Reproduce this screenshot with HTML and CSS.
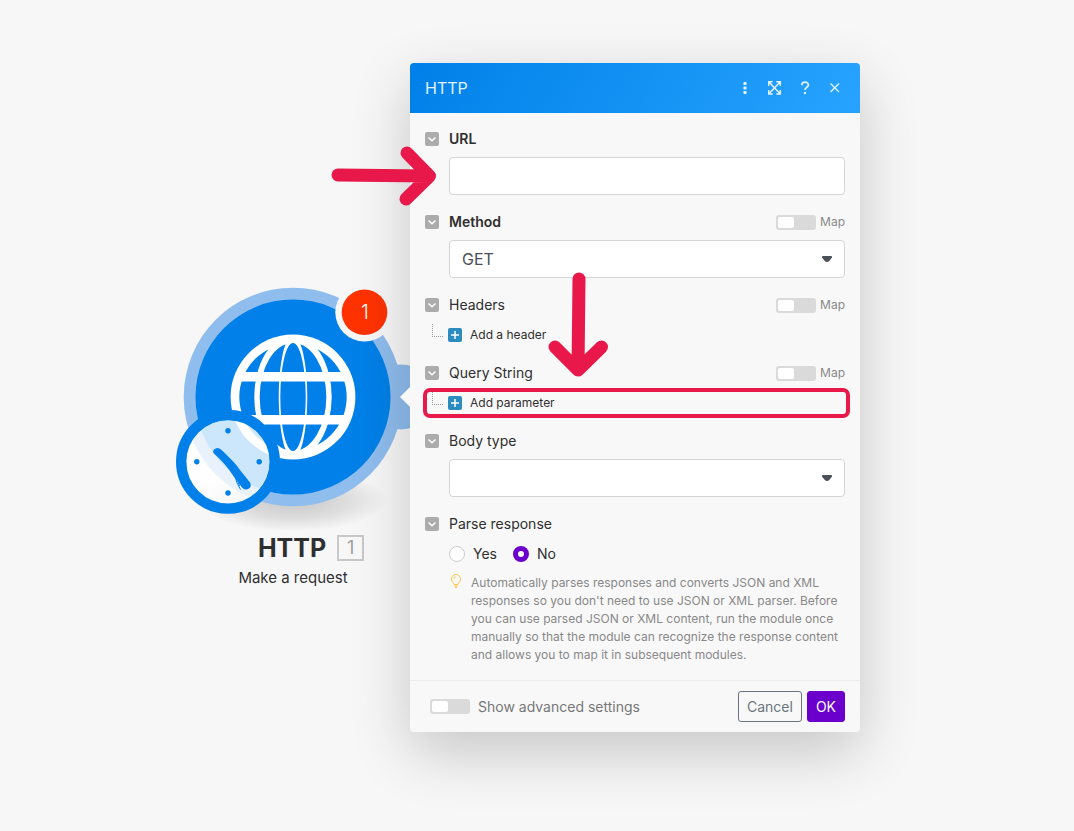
FILE: index.html
```html
<!DOCTYPE html>
<html lang="en">
<head>
  <meta charset="UTF-8">
  <meta name="viewport" content="width=device-width, initial-scale=1.0">
  <title>HTTP - Make a request</title>
  <link rel="stylesheet" href="styles.css">
</head>
<body>
  <main class="canvas">
    <section class="module">
      <svg class="module-art" viewBox="170 280 250 250" aria-hidden="true">
        <defs>
          <radialGradient id="ground">
            <stop offset="0" stop-color="#000" stop-opacity=".2"/>
            <stop offset=".6" stop-color="#000" stop-opacity=".1"/>
            <stop offset="1" stop-color="#000" stop-opacity="0"/>
          </radialGradient>
        </defs>
        <ellipse cx="293" cy="500" rx="94" ry="32" fill="url(#ground)"/>
        <circle cx="401" cy="397" r="32.5" fill="#8fbdee"/>
        <circle cx="293" cy="397" r="109.3" fill="#8fbdee"/>
        <circle cx="293" cy="397" r="97.5" fill="#0080e8"/>

        <!-- globe -->
        <circle cx="293" cy="397" r="62.4" fill="#fff"/>
        <circle cx="293" cy="397" r="53.7" fill="#0080e8"/>
        <ellipse cx="293" cy="397" rx="38.7" ry="62" fill="#fff"/>
        <ellipse cx="293" cy="397" rx="33.3" ry="54" fill="#0080e8"/>
        <ellipse cx="293" cy="397" rx="14.3" ry="62" fill="#fff"/>
        <ellipse cx="293" cy="397" rx="12.7" ry="54" fill="#0080e8"/>
        <path d="M237 372h112v9.4H237zM237 415h112v9.4H237z" fill="#fff"/>

        <!-- clock -->
        <circle cx="228" cy="461.8" r="42" fill="#fff" fill-opacity=".8"/>
        <circle cx="228" cy="461.8" r="46.8" fill="none" stroke="#0080e8" stroke-width="10.4"/>
        <g fill="#0080e8">
          <circle cx="228" cy="430.7" r="2.7"/>
          <circle cx="196.8" cy="461.8" r="2.7"/>
          <circle cx="259.2" cy="461.8" r="2.7"/>
          <circle cx="228" cy="493" r="2.7"/>
          <path d="M214 449.500Q217.500 446.500 221 449.500C229 457 236 464 240 470L250 482.500Q252 486 249 488.500Q245 491 242 487.500L234 477C228 467 221 460 214.500 454Q212 452 214 449.500Z"/>
        </g>
        <path d="M235 475Q235.500 482 240.500 489.500M237 478L239.500 486" fill="none" stroke="#0080e8"/>

        <circle cx="364.500" cy="312.300" r="29.200" fill="#f7f7f7"/>
        <circle cx="364.500" cy="312.300" r="22.800" fill="#ff3200"/>
      </svg>
      <span class="module-badge">1</span>
      <div class="module-title">
        <h1>HTTP</h1>
        <span class="module-number">1</span>
      </div>
      <p class="module-subtitle">Make a request</p>
    </section>

    <form class="dialog">
      <header class="dialog-header">
        <h2>HTTP</h2>
        <div class="dialog-tools">
          <button type="button" class="tool" aria-label="More">
            <svg viewBox="0 0 14 14"><path d="M5.500 1h3v3h-3zM5.500 5.500h3v3h-3zM5.500 10h3v3h-3z" fill="currentColor"/></svg>
          </button>
          <button type="button" class="tool" aria-label="Expand">
            <svg viewBox="0 0 14 14"><path d="M.7 5V.7h4M8.300 .7h4V5M12.300 9v4h-4M4.700 13h-4V9M.7 .7l11.600 12.300M12.300 .7L.7 13" fill="none" stroke="currentColor" stroke-width="1.500"/></svg>
          </button>
          <button type="button" class="tool" aria-label="Help">
            <svg viewBox="0 0 14 14"><path d="M3.800 4.300C3.800 0 10.400.4 10.400 3.900C10.400 6.300 7 6.200 7 9" fill="none" stroke="currentColor" stroke-width="1.700"/><circle cx="7" cy="12" r="1.200" fill="currentColor"/></svg>
          </button>
          <button type="button" class="tool" aria-label="Close">
            <svg viewBox="0 0 14 14"><path d="M2.500 2.500l8.500 8.500M11 2.500L2.500 11" fill="none" stroke="currentColor" stroke-width="1.400"/></svg>
          </button>
        </div>
      </header>

      <div class="dialog-body">
        <div class="field">
          <div class="field-head">
            <button type="button" class="collapse" aria-label="Toggle URL"><svg viewBox="0 0 14 14"><path d="M3.500 5.500L7 8.800l3.500-3.300"/></svg></button>
            <label class="field-label required" for="url">URL</label>
          </div>
          <div class="field-control">
            <input type="text" class="text-input" id="url">
          </div>
        </div>

        <div class="field">
          <div class="field-head">
            <button type="button" class="collapse" aria-label="Toggle Method"><svg viewBox="0 0 14 14"><path d="M3.500 5.500L7 8.800l3.500-3.300"/></svg></button>
            <label class="field-label required" for="method">Method</label>
            <label class="map"><input type="checkbox" class="switch">Map</label>
          </div>
          <div class="field-control">
            <select class="text-input" id="method">
              <option>GET</option>
              <option>POST</option>
            </select>
            <svg class="caret" viewBox="0 0 10 6"><path d="M.5 0h9q.5 0 .5 1.500L7 5.200Q5 6.800 3 5.200L0 1.500Q0 0 .5 0z"/></svg>
          </div>
        </div>

        <div class="field">
          <div class="field-head">
            <button type="button" class="collapse" aria-label="Toggle Headers"><svg viewBox="0 0 14 14"><path d="M3.500 5.500L7 8.800l3.500-3.300"/></svg></button>
            <span class="field-label">Headers</span>
            <label class="map"><input type="checkbox" class="switch">Map</label>
          </div>
          <div class="add-row">
            <button type="button" class="add"><svg viewBox="0 0 14 14"><path d="M7 3v8M3 7h8"/></svg>Add a header</button>
          </div>
        </div>

        <div class="field">
          <div class="field-head">
            <button type="button" class="collapse" aria-label="Toggle Query String"><svg viewBox="0 0 14 14"><path d="M3.500 5.500L7 8.800l3.500-3.300"/></svg></button>
            <span class="field-label">Query String</span>
            <label class="map"><input type="checkbox" class="switch">Map</label>
          </div>
          <div class="add-row highlighted">
            <button type="button" class="add"><svg viewBox="0 0 14 14"><path d="M7 3v8M3 7h8"/></svg>Add parameter</button>
          </div>
        </div>

        <div class="field">
          <div class="field-head">
            <button type="button" class="collapse" aria-label="Toggle Body type"><svg viewBox="0 0 14 14"><path d="M3.500 5.500L7 8.800l3.500-3.300"/></svg></button>
            <label class="field-label" for="bodyType">Body type</label>
          </div>
          <div class="field-control">
            <select class="text-input" id="bodyType">
              <option></option>
            </select>
            <svg class="caret" viewBox="0 0 10 6"><path d="M.5 0h9q.5 0 .5 1.500L7 5.200Q5 6.800 3 5.200L0 1.500Q0 0 .5 0z"/></svg>
          </div>
        </div>

        <div class="field">
          <div class="field-head">
            <button type="button" class="collapse" aria-label="Toggle Parse response"><svg viewBox="0 0 14 14"><path d="M3.500 5.500L7 8.800l3.500-3.300"/></svg></button>
            <span class="field-label">Parse response</span>
          </div>
          <div class="field-control">
            <div class="radios">
              <label><input type="radio" name="parse">Yes</label>
              <label><input type="radio" name="parse" checked>No</label>
            </div>
            <div class="help">
              <svg class="bulb" viewBox="0 0 14 16"><path d="M5 10.500C5 8.500 2.500 8 2.500 5a4.500 4.500 0 0 1 9 0C11.500 8 9 8.500 9 10.500zM5 12h4M6 13.500h2M4.800 5Q5 3 7 2.800"/></svg>
              <p>Automatically parses responses and converts JSON and XML responses so you don't need to use JSON or XML parser. Before you can use parsed JSON or XML content, run the module once manually so that the module can recognize the response content and allows you to map it in subsequent modules.</p>
            </div>
          </div>
        </div>
      </div>

      <footer class="dialog-footer">
        <label class="advanced"><input type="checkbox" class="switch">Show advanced settings</label>
        <button type="button" class="btn">Cancel</button>
        <button type="submit" class="btn btn-primary">OK</button>
      </footer>

      <svg class="arrow arrow-right" viewBox="0 0 106 62" aria-hidden="true"><path d="M7 30l91 1M76 8l22.500 23L75 54"/></svg>
      <svg class="arrow arrow-down" viewBox="0 0 62 106" aria-hidden="true"><path d="M32 8l-1 91M8 76l23 23L54.500 76"/></svg>
    </form>
  </main>
</body>
</html>
```
FILE: styles.css
```css
* {
  box-sizing: border-box;
}

body {
  margin: 0;
  background-color: #f7f7f7;
  color: #2f2f2f;
  font-family: Inter, "Liberation Sans", sans-serif;
  font-size: 14px;
}

h1, h2, p {
  margin: 0;
}

button, input, select {
  font-family: inherit;
  margin: 0;
}

button {
  cursor: pointer;
}

.canvas {
  position: relative;
  min-height: 100vh;
  overflow: hidden;
}

/* module node */
.module {
  position: absolute;
  left: 168px;
  top: 280px;
  width: 250px;
  display: flex;
  flex-direction: column;
  align-items: center;
}

.module-art {
  width: 250px;
  height: 250px;
  margin-left: 4px;
}

.module-badge {
  position: absolute;
  left: 174px;
  top: 20px;
  width: 46px;
  line-height: 24px;
  text-align: center;
  font-size: 20px;
  font-weight: 300;
  color: #fff;
}

.module-title {
  display: flex;
  align-items: center;
  gap: 11px;
  margin-left: 36px;
}

.module-title h1 {
  font-size: 25px;
  line-height: 36px;
  font-weight: 700;
}

.module-number {
  width: 27px;
  border: 2px solid #c8c8c8;
  line-height: 22px;
  text-align: center;
  font-size: 18px;
  color: #a0a0a0;
}

.module-subtitle {
  font-size: 15px;
  line-height: 24px;
}

/* settings dialog */
.dialog {
  position: absolute;
  left: 410px;
  top: 63px;
  width: 450px;
  background-color: #f8f8f8;
  border-radius: 4px;
  box-shadow: 0 20px 60px rgba(0, 0, 0, 0.2);
}

.dialog::before {
  content: "";
  position: absolute;
  left: -10px;
  top: 324px;
  border: 10px solid transparent;
  border-left-width: 0;
  border-right-color: #f8f8f8;
}

.dialog-header {
  display: flex;
  align-items: center;
  justify-content: space-between;
  height: 50px;
  padding: 0 18px 0 15px;
  border-radius: 4px 4px 0 0;
  background: linear-gradient(120deg, #0080e8, #27a3ff);
  color: #e2f2ff;
}

.dialog-header h2 {
  font-size: 16px;
  font-weight: 400;
}

.dialog-tools {
  display: flex;
  gap: 16px;
}

.tool {
  width: 14px;
  height: 14px;
  padding: 0;
  border: none;
  background: none;
  color: inherit;
}

.tool svg {
  display: block;
}

.dialog-body {
  padding: 14px 15px 16px;
}

.field + .field {
  margin-top: 15px;
}

.field-head {
  display: flex;
  align-items: center;
  gap: 10px;
  height: 24px;
  margin-bottom: 6px;
  line-height: 16px;
}

.collapse {
  width: 14px;
  height: 14px;
  padding: 0;
  border: none;
  border-radius: 2px;
  background-color: #acacac;
}

.collapse svg {
  display: block;
  fill: none;
  stroke: #fff;
  stroke-width: 1.5;
}

.required {
  font-weight: 600;
}

.map {
  display: flex;
  align-items: center;
  gap: 4px;
  margin-left: auto;
  font-size: 12px;
  color: #888;
}

.switch {
  appearance: none;
  width: 40px;
  height: 15px;
  padding: 2px;
  border-radius: 3px;
  background-color: #dadada;
}

.switch::before {
  content: "";
  display: block;
  width: 16px;
  height: 11px;
  border-radius: 2px;
  background-color: #fff;
}

.field-control {
  position: relative;
  margin-left: 24px;
}

.text-input {
  display: block;
  appearance: none;
  width: 100%;
  height: 38px;
  padding: 0 12px;
  border: 1px solid #d5d5d5;
  border-radius: 4px;
  background-color: #fff;
  font-size: 16px;
  color: #495057;
}

.caret {
  position: absolute;
  right: 13px;
  top: 16px;
  width: 10px;
  height: 6px;
  fill: #495057;
  pointer-events: none;
}

.add-row {
  position: relative;
  display: flex;
  align-items: center;
  gap: 6px;
  height: 23px;
  padding-left: 7px;
}

.add-row::before {
  content: "";
  width: 10px;
  height: 12px;
  margin-bottom: 8px;
  border: dotted #999;
  border-width: 0 0 1px 1px;
}

.highlighted::after {
  content: "";
  position: absolute;
  inset: -3px -5px -4px -2px;
  border: 4px solid #e9184a;
  border-radius: 7px;
  pointer-events: none;
}

.add {
  display: flex;
  align-items: center;
  gap: 8px;
  margin-left: -1px;
  padding: 0;
  border: none;
  background: none;
  font-size: 12px;
  color: #2f2f2f;
}

.add svg {
  width: 14px;
  height: 14px;
  border-radius: 2px;
  background-color: #2d8cbe;
  stroke: #fff;
  stroke-width: 1.5;
}

.radios {
  display: flex;
  gap: 16px;
  height: 24px;
  line-height: 16px;
}

.radios label {
  display: flex;
  align-items: center;
  gap: 8px;
}

.radios input {
  appearance: none;
  width: 16px;
  height: 16px;
  border: 1px solid #ccc;
  border-radius: 50%;
  background-color: #fff;
}

.radios input:checked {
  border: 5px solid #6b00cc;
}

.help {
  display: flex;
  gap: 8px;
  margin-top: 8px;
  font-size: 12px;
  line-height: 18px;
  color: #888;
}

.bulb {
  flex: none;
  width: 14px;
  height: 16px;
  fill: none;
  stroke: #ffc850;
}

.dialog-footer {
  display: flex;
  align-items: center;
  gap: 5px;
  padding: 10px 15px 10px 20px;
  border-top: 1px solid #ececec;
}

.advanced {
  display: flex;
  align-items: center;
  gap: 8px;
  margin-right: auto;
  color: #777;
}

.btn {
  height: 31px;
  padding: 0 8px;
  border: 1px solid #6c757d;
  border-radius: 3px;
  background-color: transparent;
  font-size: 14px;
  color: #6c757d;
}

.btn-primary {
  border-color: #6b00cc;
  background-color: #6b00cc;
  color: #fff;
}

/* pointers drawn over the dialog */
.arrow {
  position: absolute;
  fill: none;
  stroke: #e9184a;
  stroke-width: 13;
  stroke-linecap: round;
  stroke-linejoin: round;
  pointer-events: none;
}

.arrow-right {
  left: -79px;
  top: 82px;
  width: 106px;
  height: 62px;
}

.arrow-down {
  left: 137px;
  top: 208px;
  width: 62px;
  height: 106px;
}
```
